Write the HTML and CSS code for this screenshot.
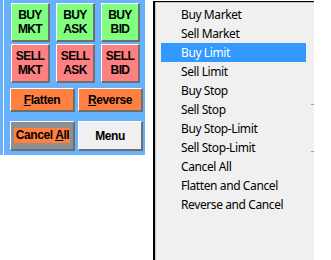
FILE: index.html
```html
<!DOCTYPE html>
<html lang="en">
<head>
  <meta charset="UTF-8" />
  <title>Order Panel</title>
  <link rel="stylesheet" href="styles.css">
</head>
<body>
  <div class="app">
    <div class="panel">
      <div class="grid3">
        <button class="btn buy">BUY<br>MKT</button>
        <button class="btn buy">BUY<br>ASK</button>
        <button class="btn buy">BUY<br>BID</button>
        <button class="btn sell">SELL<br>MKT</button>
        <button class="btn sell">SELL<br>ASK</button>
        <button class="btn sell">SELL<br>BID</button>
      </div>
      <div class="grid2">
        <button class="btn orange"><u>F</u>latten</button>
        <button class="btn orange"><u>R</u>everse</button>
        <button class="btn cancel"><span class="hl">Cancel <u>A</u>ll</span></button>
        <button class="btn menu-btn">Menu</button>
      </div>
    </div>

    <!-- order type menu -->
    <div class="menu">
      <div class="item">Buy Market</div>
      <div class="item">Sell Market</div>
      <div class="item active">Buy Limit</div>
      <div class="item">Sell Limit</div>
      <div class="item">Buy Stop</div>
      <div class="item">Sell Stop</div>
      <div class="item">Buy Stop-Limit</div>
      <div class="item">Sell Stop-Limit</div>
      <div class="item">Cancel All</div>
      <div class="item">Flatten and Cancel</div>
      <div class="item">Reverse and Cancel</div>
      <span class="tick t1"></span>
      <span class="tick t2"></span>
    </div>
  </div>
</body>
</html>
```

FILE: styles.css
```css
* {
  box-sizing: border-box;
}

body {
  margin: 0;
  background: #fff;
  font-family: "Liberation Sans", Arial, sans-serif;
}

.app {
  display: flex;
  align-items: flex-start;
  height: 260px;
}

.panel {
  width: 145px;
  height: 155px;
  padding: 3px 0 0 11px;
  background: linear-gradient(to right, #66b2ff 3px, #fff 3px, #fff 4px, #66b2ff 4px);
}

.grid3 {
  display: grid;
  grid-template-columns: 39px 39px 39px;
  grid-auto-rows: 39px;
  column-gap: 6px;
  row-gap: 2px;
}

.grid2 {
  display: grid;
  grid-template-columns: 65px 65px;
  grid-template-rows: 24px 30px;
  column-gap: 3px;
  row-gap: 9px;
  margin: 5px 0 0 -1px;
}

.btn {
  padding: 0;
  margin: 0;
  font-family: "Liberation Sans", Arial, sans-serif;
  font-weight: bold;
  font-size: 12px;
  line-height: 14px;
  letter-spacing: -0.4px;
  color: #000;
  border-style: solid;
  border-width: 1px 2px 2px 1px;
  border-color: #fff #6e6e6e #6e6e6e #fff;
  cursor: pointer;
}

.buy {
  background: #80ff80;
  letter-spacing: -0.6px;
}

.sell {
  background: #ff8080;
  letter-spacing: -0.6px;
}

.orange {
  background: #ff8040;
}

.cancel {
  background: #8f8f8f;
}

.hl {
  display: inline-block;
  background: #ff8040;
  padding: 0 1px 0 2px;
  line-height: 15px;
}

.menu-btn {
  background: #f0f0f0;
}

.menu {
  position: relative;
  margin: 1px 0 0 8px;
  width: 161px;
  height: 259px;
  padding: 3px 0 0 6px;
  background: #f0f0f0;
  border-top: 1px solid #000;
  border-left: 2px solid #000;
  box-shadow: inset 1px 1px 0 #c8c8c8;
  font-family: "Noto Sans", "Open Sans", sans-serif;
  font-size: 12px;
  letter-spacing: -0.4px;
  color: #000;
}

.item {
  width: 145px;
  height: 19px;
  line-height: 19px;
  padding-left: 20px;
  white-space: nowrap;
}

.item.active {
  background: #3399ff;
  color: #fff;
}

.tick {
  position: absolute;
  right: 0;
  width: 3px;
  height: 1px;
  background: #a0a0a0;
}

.t1 {
  top: 102px;
}

.t2 {
  top: 149px;
}
```
